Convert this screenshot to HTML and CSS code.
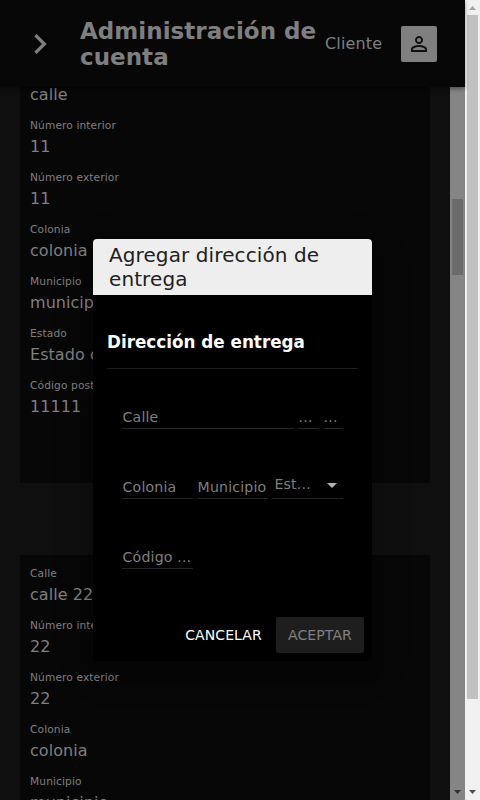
FILE: index.html
```html
<!DOCTYPE html>
<html lang="es">
<head>
<meta charset="utf-8">
<title>Administración de cuenta</title>
<link rel="stylesheet" href="styles.css">
</head>
<body>
<div class="app">
  <div class="screen">
    <header class="topbar">
      <svg class="chevron" width="40" height="40" viewBox="0 0 24 24"><path d="M10 6 8.590 7.410 13.170 12l-4.580 4.590L10 18l6-6z"/></svg>
      <h1>Administración de cuenta</h1>
      <span class="role">Cliente</span>
      <button class="user"><svg width="24" height="24" viewBox="0 0 24 24"><path d="M12 5.900a2.100 2.100 0 1 1 0 4.200 2.100 2.100 0 0 1 0-4.200m0 9c2.970 0 6.100 1.460 6.100 2.100v1.100H5.900V17c0-.640 3.130-2.100 6.100-2.100M12 4C9.790 4 8 5.790 8 8s1.790 4 4 4 4-1.790 4-4-1.790-4-4-4m0 9c-2.670 0-8 1.340-8 4v3h16v-3c0-2.660-5.330-4-8-4"/></svg></button>
    </header>
    <div class="body">
      <main class="content">
        <dl class="card first">
          <div class="item"><dd>calle</dd></div>
          <div class="item"><dt>Número interior</dt><dd>11</dd></div>
          <div class="item"><dt>Número exterior</dt><dd>11</dd></div>
          <div class="item"><dt>Colonia</dt><dd>colonia</dd></div>
          <div class="item"><dt>Municipio</dt><dd>municipio</dd></div>
          <div class="item"><dt>Estado</dt><dd>Estado de México</dd></div>
          <div class="item"><dt>Código postal</dt><dd>11111</dd></div>
        </dl>
        <dl class="card second">
          <div class="item"><dt>Calle</dt><dd>calle 22</dd></div>
          <div class="item"><dt>Número interior</dt><dd>22</dd></div>
          <div class="item"><dt>Número exterior</dt><dd>22</dd></div>
          <div class="item"><dt>Colonia</dt><dd>colonia</dd></div>
          <div class="item"><dt>Municipio</dt><dd>municipio</dd></div>
        </dl>
      </main>
      <div class="scroll inner"><i class="thumb"></i><svg class="arrow" width="15" height="15"><path d="M4 5h7L7.500 9z"/></svg></div>
    </div>
  </div>
  <div class="scroll outer"><svg class="arrow up" width="15" height="15"><path d="M4 10h7L7.500 6z"/></svg><i class="thumb"></i><svg class="arrow" width="15" height="15"><path d="M4 5h7L7.500 9z"/></svg></div>
</div>
<section class="dialog" role="dialog">
  <h2>Agregar dirección de entrega</h2>
  <div class="form">
    <h3>Dirección de entrega</h3>
    <div class="row street"><span class="field">Calle</span><span class="field dots">...</span><span class="field dots">...</span></div>
    <div class="row thirds"><span class="field">Colonia</span><span class="field">Municipio</span><span class="field select">Est...<svg width="10" height="5"><path d="M0 0h10L5 5z"/></svg></span></div>
    <div class="row thirds"><span class="field">Código ...</span></div>
  </div>
  <footer><button class="cancel">CANCELAR</button><button class="accept">ACEPTAR</button></footer>
</section>
</body>
</html>
```

FILE: styles.css
```css
* { box-sizing: border-box; }
body { margin: 0; font-family: "DejaVu Sans", sans-serif; height: 800px; overflow: hidden; background: #0f0f0f; }
h1, h2, h3, dl, dd, dt { margin: 0; }
button { font: inherit; border: 0; padding: 0; }
.app { display: flex; height: 800px; }
.screen { width: 465px; display: flex; flex-direction: column; }
.topbar { height: 87px; flex: none; display: flex; align-items: center; padding-left: 20px; background: #070707; color: #7f7f7f; box-shadow: 0 2px 4px rgba(0,0,0,.4); z-index: 1; }
.chevron { fill: #7f7f7f; flex: none; }
h1 { width: 245px; margin-left: 20px; font-size: 23px; line-height: 26px; padding-top: 1px; letter-spacing: .030px; }
.role { width: 76px; font-size: 16px; letter-spacing: .15px; }
.user { width: 36px; height: 36px; border-radius: 2px; background: #7f7f7f; display: grid; place-items: center; }
.user svg { display: block; fill: #111; }
.body { flex: 1; min-height: 0; display: flex; }
.content { width: 450px; padding: 0 20px; background: #0f0f0f; overflow: hidden; }
.card { background: #070707; color: #7f7f7f; padding: 0 10px; }
.first { height: 396px; display: flow-root; overflow: hidden; }
.first .item:first-child { height: 34px; }
.first .item:first-child dd { margin-top: -4px; }
.second { margin-top: 72px; height: 340px; padding-top: 10px; }
.item { height: 52px; white-space: nowrap; }
dt { font-size: 10.670px; line-height: 18px; letter-spacing: .100px; }
dd { font-size: 16px; line-height: 24px; letter-spacing: .050px; }
.scroll { width: 15px; display: flex; flex-direction: column; align-items: center; flex: none; }
.scroll .thumb { width: 11px; }
.arrow { display: block; margin-top: auto; fill: #505050; }
.inner { background: #858585; }
.inner .thumb { margin-top: 112px; height: 76px; background: #6b6b6b; }
.inner .arrow { fill: #303030; }
.outer { background: #f1f1f1; }
.outer .thumb { height: 684px; background: #c1c1c1; }
.outer .up { margin: 0; fill: #a3a3a3; }
.dialog { position: absolute; left: 93px; top: 239px; width: 279px; height: 422px; z-index: 2; background: #000; border-radius: 4px; overflow: hidden; display: flex; flex-direction: column; box-shadow: 0 11px 15px rgba(0,0,0,.1), 0 9px 46px rgba(0,0,0,.12); }
h2 { height: 56px; padding: 4px 16px; background: #eee; color: #212121; font-size: 20px; line-height: 24px; font-weight: 400; letter-spacing: .100px; }
.form { padding: 34px 14px 0; }
h3 { height: 40px; color: #fff; font-size: 16.800px; line-height: 26px; border-bottom: 1px solid #1e1e1e; white-space: nowrap; }
.row { display: grid; margin: 0 15px; height: 70px; column-gap: 4px; align-items: end; }
.street { height: 60px; grid-template-columns: 172px 21px 20px; }
.thirds { grid-template-columns: 71px 71px 71px; }
.field { height: 24px; padding-left: .6px; border-bottom: 1px solid #252525; color: #7f7f7f; font-size: 14.100px; line-height: 24px; white-space: nowrap; letter-spacing: .180px; }
.select { display: flex; height: 30px; justify-content: space-between; padding: 3px 6px 0 2.500px; }
.select svg { fill: #b3b3b3; margin-top: 11px; }
footer { margin-top: auto; height: 44px; padding: 0 8px 8px; display: flex; justify-content: flex-end; gap: 2px; }
footer button { height: 36px; width: 88px; font-size: 14px; letter-spacing: .100px; border-radius: 2px; }
.cancel { width: 102px; padding-left: 1px; background: transparent; color: #fff; }
.accept { background: #1e1e1e; color: #808080; }
```
